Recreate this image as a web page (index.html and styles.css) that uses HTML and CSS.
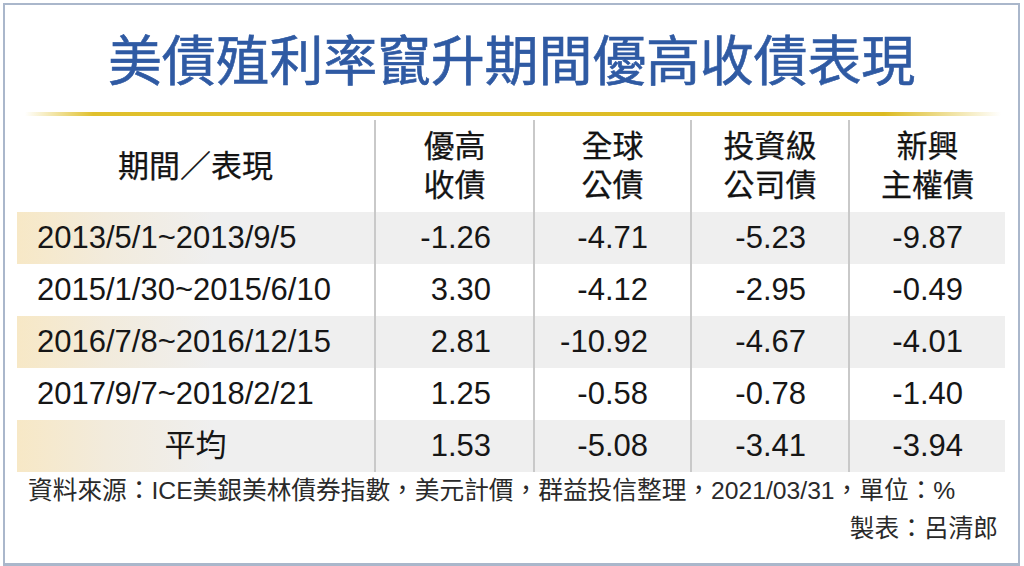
FILE: index.html
```html
<!DOCTYPE html>
<html lang="zh-Hant">
<head>
<meta charset="utf-8">
<title>美債殖利率竄升期間優高收債表現</title>
<link rel="stylesheet" href="styles.css">
</head>
<body>
<div class="frame">
  <h1 class="title">美債殖利率竄升期間優高收債表現</h1>
  <div class="rule"></div>
  <div class="table">
    <div class="head first">期間／表現</div>
    <div class="head"><span class="line">優高</span><span class="line">收債</span></div>
    <div class="head"><span class="line">全球</span><span class="line">公債</span></div>
    <div class="head"><span class="line">投資級</span><span class="line">公司債</span></div>
    <div class="head"><span class="line">新興</span><span class="line">主權債</span></div>

    <div class="cell label shade">2013/5/1~2013/9/5</div>
    <div class="cell num shade">-1.26</div>
    <div class="cell num shade">-4.71</div>
    <div class="cell num shade">-5.23</div>
    <div class="cell num shade">-9.87</div>

    <div class="cell label">2015/1/30~2015/6/10</div>
    <div class="cell num">3.30</div>
    <div class="cell num">-4.12</div>
    <div class="cell num">-2.95</div>
    <div class="cell num">-0.49</div>

    <div class="cell label shade">2016/7/8~2016/12/15</div>
    <div class="cell num shade">2.81</div>
    <div class="cell num shade">-10.92</div>
    <div class="cell num shade">-4.67</div>
    <div class="cell num shade">-4.01</div>

    <div class="cell label">2017/9/7~2018/2/21</div>
    <div class="cell num">1.25</div>
    <div class="cell num">-0.58</div>
    <div class="cell num">-0.78</div>
    <div class="cell num">-1.40</div>

    <div class="cell label center shade">平均</div>
    <div class="cell num shade">1.53</div>
    <div class="cell num shade">-5.08</div>
    <div class="cell num shade">-3.41</div>
    <div class="cell num shade">-3.94</div>
  </div>
  <div class="footer">
    <p class="source">資料來源：ICE美銀美林債券指數，美元計價，群益投信整理，2021/03/31，單位：%</p>
    <p class="maker">製表：呂清郎</p>
  </div>
</div>
</body>
</html>
```
FILE: styles.css
```css
html, body {
  margin: 0;
  padding: 0;
  background: #ffffff;
}

body {
  width: 1024px;
  height: 566px;
  overflow: hidden;
  font-family: "Liberation Sans", "Noto Sans CJK TC", sans-serif;
  color: #151515;
}

.frame {
  box-sizing: border-box;
  margin: 3px 0 0 3px;
  width: 1017px;
  height: 563px;
  border: 2px solid #aab7cb;
  border-bottom-width: 3px;
  background: #ffffff;
}

.title {
  margin: 27px 0 0 0;
  height: 60px;
  line-height: 60px;
  text-align: center;
  font-family: "Liberation Sans", "Noto Sans CJK TC", sans-serif;
  font-size: 54px;
  font-weight: 400;
  letter-spacing: -0.2px;
  color: #2f5aa3;
  -webkit-text-stroke: 0.6px #2f5aa3;
}

.rule {
  margin: 20px 0 0 20px;
  width: 976px;
  height: 4px;
  background: linear-gradient(to right, rgba(223, 192, 40, 0) 0%, #e0c02c 7%, #dcbb22 88%, rgba(223, 192, 40, 0) 100%);
}

.table {
  margin: 4px 0 0 12px;
  display: grid;
  grid-template-columns: 357px 159px 157px 158px 157px;
  grid-template-rows: 92px repeat(5, 52px);
}

.head {
  display: flex;
  flex-direction: column;
  align-items: center;
  justify-content: center;
  text-align: center;
  font-size: 31px;
  line-height: 39px;
  font-weight: 400;
  color: #141414;
  -webkit-text-stroke: 0.25px #141414;
  border-left: 2px solid #c9c9c9;
}

.head .line {
  display: block;
}

.head.first {
  border-left: none;
}

.cell {
  display: flex;
  align-items: center;
  font-size: 31px;
  line-height: 52px;
  color: #161616;
  border-left: 2px solid #c9c9c9;
}

.cell.label {
  border-left: none;
  padding-left: 20px;
}

.cell.label.center {
  justify-content: center;
  padding-left: 0;
}

.cell.num {
  justify-content: flex-end;
  padding-right: 42px;
}

.cell.shade {
  background: #efefef;
}

.cell.label.shade {
  background: linear-gradient(to right, #f7e8c6 0%, #f2ebdc 25%, #efefef 55%, #efefef 100%);
}

.footer {
  padding: 0 20px 0 23px;
  font-size: 24.7px;
  line-height: 38px;
  color: #2a2a2a;
}

.footer p {
  margin: 0;
}

.maker {
  text-align: right;
}
```
